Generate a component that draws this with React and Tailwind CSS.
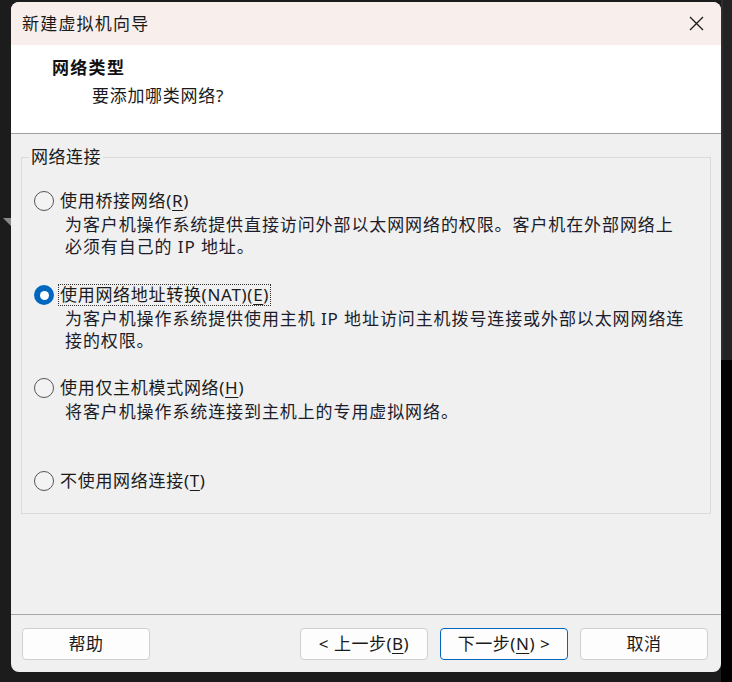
import React from "react";

const FONT = { fontFamily: '"Noto Sans", "Noto Sans CJK SC", sans-serif' };

function Radio({ checked }) {
  if (checked) {
    return (
      <div className="w-[20px] h-[20px] rounded-full bg-[#0067c0] flex items-center justify-center shrink-0">
        <div className="w-[9px] h-[9px] rounded-full bg-white" />
      </div>
    );
  }
  return <div className="w-[20px] h-[20px] rounded-full border border-[#555555] bg-[#f3f3f3] shrink-0" />;
}

function U({ children }) {
  return <span className="underline underline-offset-[3px] decoration-1">{children}</span>;
}

function Option({ checked, label, desc, className }) {
  return (
    <div className={className}>
      <div className="flex items-center h-[22px] ml-[5px]">
        <Radio checked={checked} />
        <div
          className={
            "ml-[4px] px-[1px] h-[22px] flex items-center text-[17px] tracking-[0.7px] text-[#1a1a1a] border " +
            (checked ? "border-dotted border-[#333333]" : "border-transparent")
          }
        >
          {label}
        </div>
      </div>
      {desc && (
        <div className="pl-[36px] mt-[2px] text-[17px] leading-[22px] tracking-[0.9px] text-[#1c1c2a] whitespace-nowrap">
          {desc.map((l, i) => (
            <div key={i}>{l}</div>
          ))}
        </div>
      )}
    </div>
  );
}

function Btn({ children, primary }) {
  return (
    <div
      className={
        "w-[128px] h-[32px] rounded-[4px] bg-[#fdfdfd] border flex items-center justify-center text-[17px] text-[#1a1a1a] tracking-[0.5px] " +
        (primary ? "border-[#0067c0]" : "border-[#d0d0d0]")
      }
    >
      {children}
    </div>
  );
}

export default function App() {
  return (
    <div className="w-[732px] h-[682px] bg-[#1c1c1c] flex overflow-hidden" style={FONT}>
      {/* left strip */}
      <div className="w-[11px] shrink-0 flex flex-col">
        <div className="h-[218px]" />
        <svg width="11" height="9" viewBox="0 0 11 9" className="block">
          <polygon points="3,0 11,0 11,8" fill="#8a8a8a" />
        </svg>
      </div>

      {/* dialog */}
      <div className="w-[710px] h-[670px] mt-[2px] rounded-[8px] overflow-hidden bg-[#f0f0f0] flex flex-col shrink-0">
        {/* title bar */}
        <div className="h-[43px] bg-[#f8efec] flex items-center justify-between pl-[11px] pr-[17px] shrink-0">
          <div className="text-[17px] tracking-[1.2px] text-[#1a1a1a]">新建虚拟机向导</div>
          <svg width="15" height="15" viewBox="0 0 15 15">
            <path d="M1 1 L14 14 M14 1 L1 14" stroke="#1a1a1a" strokeWidth="1.3" fill="none" />
          </svg>
        </div>

        {/* header */}
        <div className="h-[88px] bg-white shrink-0 pt-[12px]">
          <div className="pl-[41px] text-[17px] font-bold leading-[22px] tracking-[1.3px] text-[#111111]">网络类型</div>
          <div className="pl-[81px] mt-[6px] text-[17px] leading-[22px] tracking-[0.7px] text-[#1a1a1a]">要添加哪类网络?</div>
        </div>
        <div className="h-px bg-[#a0a0a0] shrink-0" />

        {/* body */}
        <div className="flex-1 px-[10px] pt-[12px]">
          <fieldset className="border border-[#dadada] pl-[7px] pr-[7px] pb-[21px] m-0">
            <legend className="px-[2px] text-[17px] leading-[22px] tracking-[0.5px] text-[#1a1a1a]">网络连接</legend>
            <Option
              className="mt-[22px]"
              label={<>使用桥接网络(<U>R</U>)</>}
              desc={[
                "为客户机操作系统提供直接访问外部以太网网络的权限。客户机在外部网络上",
                "必须有自己的 IP 地址。",
              ]}
            />
            <Option
              className="mt-[26px]"
              checked
              label={<>使用网络地址转换(NAT)(<U>E</U>)</>}
              desc={[
                "为客户机操作系统提供使用主机 IP 地址访问主机拨号连接或外部以太网网络连",
                "接的权限。",
              ]}
            />
            <Option
              className="mt-[25px]"
              label={<>使用仅主机模式网络(<U>H</U>)</>}
              desc={["将客户机操作系统连接到主机上的专用虚拟网络。"]}
            />
            <Option className="mt-[47px]" label={<>不使用网络连接(<U>T</U>)</>} />
          </fieldset>
        </div>

        <div className="h-px bg-[#a8a8a8] shrink-0" />
        {/* footer */}
        <div className="h-[57px] shrink-0 flex items-start pt-[13px] pl-[11px] pr-[13px]">
          <Btn>帮助</Btn>
          <div className="flex-1" />
          <div className="flex gap-[12px]">
            <Btn>&lt; 上一步(<U>B</U>)</Btn>
            <Btn primary>下一步(<U>N</U>) &gt;</Btn>
            <Btn>取消</Btn>
          </div>
        </div>
      </div>

      {/* right strip */}
      <div className="w-[11px] shrink-0 flex flex-col">
        <div className="h-[360px] bg-[#232323] border-l-2 border-[#2e2e2e]" />
        <div className="flex-1 bg-black" />
      </div>
    </div>
  );
}
